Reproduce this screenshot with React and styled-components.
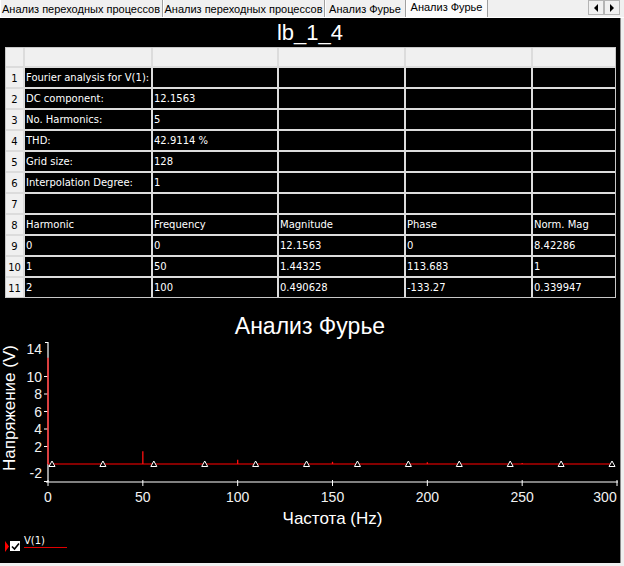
import React from "react";
import styled, { createGlobalStyle } from "styled-components";

const Global = createGlobalStyle`
  html, body { margin: 0; padding: 0; background: #f0f0f0; }
  #root { width: 624px; height: 566px; }
`;

const Page = styled.div`
  width: 624px;
  height: 566px;
  background: #f0f0f0;
  overflow: hidden;
  display: flex;
  flex-direction: column;
`;

const TabBar = styled.div`
  display: flex;
  height: 18px;
  flex: none;
  border-bottom: 1px solid #ffffff;
  box-sizing: border-box;
`;

const Tab = styled.div`
  width: ${(p) => p.$w}px;
  flex: none;
  box-sizing: border-box;
  display: flex;
  align-items: center;
  justify-content: center;
  padding-bottom: ${(p) => (p.$active ? 3 : 0)}px;
  font-family: "Liberation Sans", Arial, sans-serif;
  font-size: 11px;
  color: #000;
  white-space: nowrap;
  overflow: hidden;
  background: ${(p) => (p.$active ? "#fbfbfb" : "#f0f0f0")};
  border-right: 1px solid #a0a0a0;
  box-shadow: inset 1px 0 #ffffff;
`;

const ScrollGroup = styled.div`
  margin-left: auto;
  margin-right: 4px;
  display: flex;
  height: 15px;
`;

const ScrollButton = styled.div`
  width: 16px;
  box-sizing: border-box;
  border: 1px solid #b4b4b4;
  background: #f0f0f0;
  display: flex;
  align-items: center;
  justify-content: center;
  &::before {
    content: "";
    width: 0;
    height: 0;
    border-top: 4px solid transparent;
    border-bottom: 4px solid transparent;
    ${(p) =>
      p.$dir === "left"
        ? "border-right: 4px solid #000;"
        : "border-left: 4px solid #000;"}
  }
`;

const Panel = styled.div`
  width: 620px;
  height: 545px;
  flex: none;
  background: #000;
  border-right: 1px solid #8c8c8c;
  display: flex;
  flex-direction: column;
`;

const Title = styled.div`
  height: 29px;
  flex: none;
  text-align: center;
  font-family: "Liberation Sans", Arial, sans-serif;
  font-size: 22px;
  line-height: 29px;
  color: #fff;
`;

const Table = styled.div`
  margin-left: 5px;
  width: 611px;
  box-sizing: border-box;
  display: grid;
  grid-template-columns: 17px 126px 124px 125px 125px 82px;
  grid-template-rows: 18px repeat(11, 19px);
  gap: 2px;
  border: 1px solid #c8c8c8;
  background: #dcdcdc;
  flex: none;
`;

const HeadCell = styled.div`
  background: #f0f0f0;
`;

const NumCell = styled.div`
  background: #f0f0f0;
  color: #000;
  font-family: "DejaVu Sans", sans-serif;
  font-size: 10px;
  display: flex;
  align-items: center;
  justify-content: center;
  padding-top: 2px;
  box-sizing: border-box;
`;

const Cell = styled.div`
  background: #000;
  color: #fff;
  font-family: "DejaVu Sans", sans-serif;
  font-size: 10px;
  display: flex;
  align-items: center;
  padding-left: 1px;
  white-space: nowrap;
  overflow: hidden;
`;

const ChartTitle = styled.div`
  height: 43px;
  flex: none;
  box-sizing: border-box;
  padding-top: 13px;
  text-align: center;
  font-family: "Liberation Sans", Arial, sans-serif;
  font-size: 23px;
  line-height: 30px;
  color: #fff;
`;

const ChartRow = styled.div`
  display: flex;
  height: 165px;
  flex: none;
`;

const YLabel = styled.div`
  width: 24px;
  flex: none;
  box-sizing: border-box;
  padding-left: 3px;
  margin-top: 1px;
  writing-mode: vertical-rl;
  transform: rotate(180deg);
  height: 132px;
  text-align: center;
  font-family: "Liberation Sans", Arial, sans-serif;
  font-size: 17px;
  line-height: 19px;
  color: #fff;
  white-space: nowrap;
`;

const Plot = styled.svg`
  display: block;
  width: 596px;
  height: 165px;
  flex: none;
`;

const XTitle = styled.div`
  height: 26px;
  flex: none;
  box-sizing: border-box;
  padding-left: 48px;
  padding-right: 3px;
  text-align: center;
  font-family: "Liberation Sans", Arial, sans-serif;
  font-size: 17px;
  line-height: 26px;
  color: #fff;
`;

const Legend = styled.div`
  display: flex;
  align-items: flex-start;
  padding-left: 5px;
  padding-top: 9px;
`;

const Check = styled.div`
  width: 10px;
  height: 10px;
  margin-left: 1px;
  background: #fff;
  display: flex;
  align-items: center;
  justify-content: center;
`;

const Series = styled.div`
  margin-left: 4px;
  margin-top: -6px;
  display: flex;
  flex-direction: column;
`;

const SeriesName = styled.div`
  font-family: "DejaVu Sans", sans-serif;
  font-size: 10px;
  line-height: 11px;
  color: #fff;
`;

const SeriesLine = styled.div`
  width: 43px;
  height: 1px;
  margin-top: 1px;
  background: #e00000;
`;

const rows = [
  ["Fourier analysis for V(1):", "", "", "", ""],
  ["DC component:", "12.1563", "", "", ""],
  ["No. Harmonics:", "5", "", "", ""],
  ["THD:", "42.9114 %", "", "", ""],
  ["Grid size:", "128", "", "", ""],
  ["Interpolation Degree:", "1", "", "", ""],
  ["", "", "", "", ""],
  ["Harmonic", "Frequency", "Magnitude", "Phase", "Norm. Mag"],
  ["0", "0", "12.1563", "0", "8.42286"],
  ["1", "50", "1.44325", "113.683", "1"],
  ["2", "100", "0.490628", "-133.27", "0.339947"],
];

const px = (hz) => 24 + hz * 1.8967;
const py = (v) => 123 - v * 8.75;

const yTicks = [
  { v: 14, label: "14", ly: 8 },
  { v: 10, label: "10" },
  { v: 8, label: "8" },
  { v: 6, label: "6" },
  { v: 4, label: "4" },
  { v: 2, label: "2" },
  { v: -2, label: "-2", ly: 132 },
];

const xTicks = [0, 50, 100, 150, 200, 250, 300];

const stems = [
  [0, 12.1563],
  [50, 1.44325],
  [100, 0.490628],
  [150, 0.25],
  [200, 0.2],
  [250, 0.12],
];

const tabs = [
  { t: "Анализ переходных процессов", w: 163 },
  { t: "Анализ переходных процессов", w: 162 },
  { t: "Анализ Фурье", w: 81 },
  { t: "Анализ Фурье", w: 82, active: true },
];

function Chart() {
  const tickColor = "#f2f2f2";
  return (
    <Plot viewBox="0 0 596 165">
      <line x1="24" y1="1" x2="24" y2="141" stroke="#fff" strokeWidth="1.2" />
      <line x1="21" y1="1.5" x2="24" y2="1.5" stroke="#fff" strokeWidth="1" />
      <line x1="22" y1="141" x2="594" y2="141" stroke="#fff" strokeWidth="1.2" />
      {yTicks.map((t) => (
        <g key={t.label}>
          {t.v !== 14 && (
            <line x1="20" y1={py(t.v)} x2="24" y2={py(t.v)} stroke="#fff" strokeWidth="1" />
          )}
          <text
            x="18"
            y={t.ly !== undefined ? t.ly : py(t.v)}
            fill={tickColor}
            fontFamily="Liberation Sans, Arial, sans-serif"
            fontSize="14"
            textAnchor="end"
            dominantBaseline="central"
          >
            {t.label}
          </text>
        </g>
      ))}
      {xTicks.map((hz) => (
        <g key={hz}>
          <line x1={px(hz)} y1="139" x2={px(hz)} y2="145" stroke="#fff" strokeWidth="1" />
          <text
            x={hz === 300 ? 581 : px(hz)}
            y="156"
            fill={tickColor}
            fontFamily="Liberation Sans, Arial, sans-serif"
            fontSize="14"
            textAnchor="middle"
            dominantBaseline="central"
          >
            {hz}
          </text>
        </g>
      ))}
      <line x1="24" y1="123" x2="588" y2="123" stroke="#b00000" strokeWidth="1.5" />
      {stems.map(([hz, v]) => (
        <line key={hz} x1={px(hz)} y1="123" x2={px(hz)} y2={py(v)} stroke="#ff1010" strokeWidth="1.3" />
      ))}
      {Array.from({ length: 12 }, (_, i) => {
        const x = 28 + i * 50.91;
        return (
          <polygon
            key={i}
            points={`${x},120 ${x - 3},125.5 ${x + 3},125.5`}
            fill="#000"
            stroke="#fff"
            strokeWidth="1"
          />
        );
      })}
    </Plot>
  );
}

export default function App() {
  return (
    <Page>
      <Global />
      <TabBar>
        {tabs.map((tab, i) => (
          <Tab key={i} $w={tab.w} $active={tab.active}>
            {tab.t}
          </Tab>
        ))}
        <ScrollGroup>
          <ScrollButton $dir="left" />
          <ScrollButton $dir="right" />
        </ScrollGroup>
      </TabBar>
      <Panel>
        <Title>lb_1_4</Title>
        <Table>
          {Array.from({ length: 6 }, (_, i) => (
            <HeadCell key={"h" + i} />
          ))}
          {rows.map((r, ri) => (
            <React.Fragment key={ri}>
              <NumCell>{ri + 1}</NumCell>
              {r.map((c, ci) => (
                <Cell key={ci}>{c}</Cell>
              ))}
            </React.Fragment>
          ))}
        </Table>
        <ChartTitle>Анализ Фурье</ChartTitle>
        <ChartRow>
          <YLabel>Напряжение (V)</YLabel>
          <Chart />
        </ChartRow>
        <XTitle>Частота (Hz)</XTitle>
        <Legend>
          <svg width="4" height="11" viewBox="0 0 4 11">
            <polygon points="0,0 4,5.5 0,11" fill="#ff0000" />
          </svg>
          <Check>
            <svg width="9" height="9" viewBox="0 0 9 9">
              <path d="M1 4.5 L3.5 7 L8 1.5" stroke="#000" strokeWidth="1.6" fill="none" />
            </svg>
          </Check>
          <Series>
            <SeriesName>V(1)</SeriesName>
            <SeriesLine />
          </Series>
        </Legend>
      </Panel>
    </Page>
  );
}
